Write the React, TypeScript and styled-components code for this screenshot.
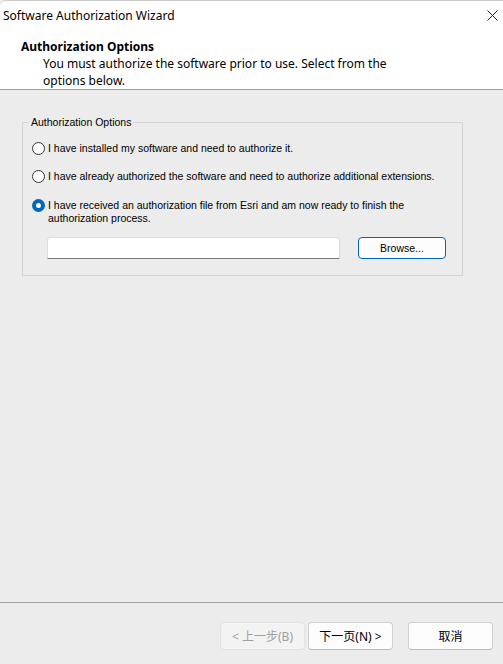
import React from "react";
import styled, { createGlobalStyle } from "styled-components";

const GlobalStyle = createGlobalStyle`
  html, body { margin: 0; padding: 0; }
  body { width: 503px; height: 664px; overflow: hidden; background: #ececec; }
  * { box-sizing: border-box; }
`;

const uiFont = `"Noto Sans", "Noto Sans CJK SC", sans-serif`;
const formFont = `"Liberation Sans", Arial, sans-serif`;

const Window = styled.div`
  width: 503px;
  height: 664px;
  display: flex;
  flex-direction: column;
  background: #ececec;
  font-family: ${uiFont};
  color: #000;
`;

const TitleBar = styled.div`
  height: 30px;
  flex: none;
  display: flex;
  align-items: center;
  justify-content: space-between;
  padding: 0 3px 0 3px;
  background: #fff;
  border-top: 1px solid #c9c9c9;
  border-top-left-radius: 6px;
  font-size: 12px;
  line-height: 16px;
`;

const CloseBox = styled.div`
  width: 16px;
  height: 16px;
  display: flex;
  align-items: center;
  justify-content: center;
`;

const Header = styled.div`
  height: 60px;
  flex: none;
  background: #fff;
  border-bottom: 1px solid #a0a0a0;
  padding: 8px 0 0 21px;
  display: flex;
  flex-direction: column;
`;

const HeaderTitle = styled.div`
  font-weight: 700;
  font-size: 12px;
  line-height: 17px;
`;

const HeaderText = styled.div`
  font-size: 12px;
  line-height: 17px;
  padding-left: 22px;
  width: 400px;
`;

const Body = styled.div`
  flex: 1;
  padding: 25px 40px 0 22px;
`;

const GroupBox = styled.fieldset`
  margin: 0;
  border: 1px solid #d5d5d5;
  padding: 13px 9px 16px 9px;
  font-family: ${formFont};
  font-size: 10.5px;
  display: flex;
  flex-direction: column;
`;

const Legend = styled.legend`
  padding: 0 2px;
  margin-left: -3px;
  line-height: 14px;
  font-size: 10.5px;
  color: #000;
`;

const OptionRow = styled.label<{ $gap: number }>`
  display: flex;
  align-items: flex-start;
  margin-top: ${(p) => p.$gap}px;
  line-height: 13px;
  color: #000;
`;

const Radio = styled.span<{ $checked?: boolean }>`
  flex: none;
  width: 13px;
  height: 13px;
  margin-right: 3px;
  border-radius: 50%;
  border: ${(p) => (p.$checked ? "none" : "1px solid #333")};
  background: ${(p) => (p.$checked ? "#0067c0" : "#fff")};
  display: flex;
  align-items: center;
  justify-content: center;
  &::after {
    content: "";
    display: ${(p) => (p.$checked ? "block" : "none")};
    width: 5px;
    height: 5px;
    border-radius: 50%;
    background: #fff;
  }
`;

const OptionText = styled.span`
  max-width: 395px;
`;

const FileRow = styled.div`
  display: flex;
  align-items: center;
  margin-top: 12px;
  padding-left: 15px;
  gap: 18px;
`;

const FileInput = styled.div`
  width: 293px;
  height: 22px;
  background: #fff;
  border: 1px solid #dcdcdc;
  border-bottom: 1px solid #7a7a7a;
  border-radius: 3px 3px 0 0;
`;

const BrowseButton = styled.div`
  width: 88px;
  height: 22px;
  border: 1px solid #0067c0;
  border-radius: 4px;
  background: #fdfdfd;
  display: flex;
  align-items: center;
  justify-content: center;
  font-size: 10.5px;
  color: #000;
`;

const Footer = styled.div`
  height: 62px;
  flex: none;
  border-top: 1px solid #a0a0a0;
  display: flex;
  align-items: flex-start;
  justify-content: flex-end;
  padding: 19px 10px 0 0;
`;

const DialogButton = styled.div<{ $disabled?: boolean; $space?: number }>`
  width: 85px;
  height: 28px;
  margin-left: ${(p) => p.$space ?? 0}px;
  border: 1px solid ${(p) => (p.$disabled ? "#e2e2e2" : "#d0d0d0")};
  border-bottom-color: ${(p) => (p.$disabled ? "#e2e2e2" : "#bcbcbc")};
  border-radius: 4px;
  background: ${(p) => (p.$disabled ? "#f3f3f3" : "#fdfdfd")};
  color: ${(p) => (p.$disabled ? "#a0a0a0" : "#000")};
  display: flex;
  align-items: center;
  justify-content: center;
  font-family: ${uiFont};
  font-size: 12px;
`;

export default function App() {
  return (
    <>
      <GlobalStyle />
      <Window>
        <TitleBar>
          <span>Software Authorization Wizard</span>
          <CloseBox>
            <svg width="11" height="11" viewBox="0 0 11 11">
              <path d="M0.5 0.5 L10.5 10.5 M10.5 0.5 L0.5 10.5" stroke="#222" strokeWidth="1" />
            </svg>
          </CloseBox>
        </TitleBar>
        <Header>
          <HeaderTitle>Authorization Options</HeaderTitle>
          <HeaderText>
            You must authorize the software prior to use. Select from the options below.
          </HeaderText>
        </Header>
        <Body>
          <GroupBox>
            <Legend>Authorization Options</Legend>
            <OptionRow $gap={0}>
              <Radio />
              <OptionText>I have installed my software and need to authorize it.</OptionText>
            </OptionRow>
            <OptionRow $gap={15}>
              <Radio />
              <OptionText>
                I have already authorized the software and need to authorize additional extensions.
              </OptionText>
            </OptionRow>
            <OptionRow $gap={16}>
              <Radio $checked />
              <OptionText>
                I have received an authorization file from Esri and am now ready to finish the
                authorization process.
              </OptionText>
            </OptionRow>
            <FileRow>
              <FileInput />
              <BrowseButton>Browse...</BrowseButton>
            </FileRow>
          </GroupBox>
        </Body>
        <Footer>
          <DialogButton $disabled>&lt; 上一步(B)</DialogButton>
          <DialogButton $space={3}>下一页(N) &gt;</DialogButton>
          <DialogButton $space={15}>取消</DialogButton>
        </Footer>
      </Window>
    </>
  );
}
